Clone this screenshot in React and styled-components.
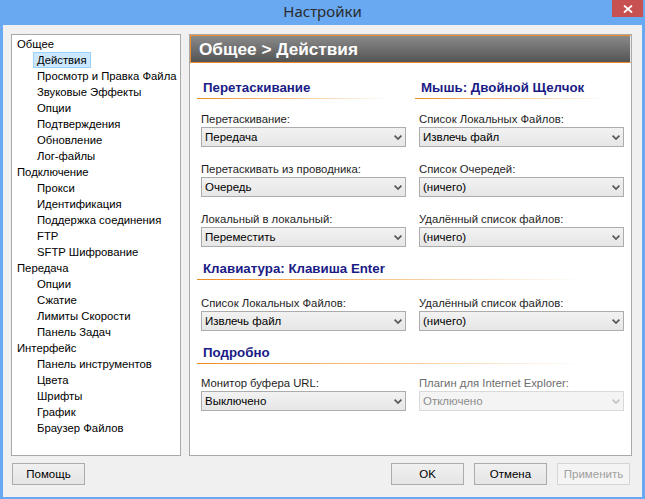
import React from "react";
import styled, { createGlobalStyle } from "styled-components";

const Global = createGlobalStyle`
  html, body { margin: 0; padding: 0; width: 645px; height: 499px; overflow: hidden; }
  body { font-family: "Liberation Sans", Arial, sans-serif; }
  * { box-sizing: border-box; }
`;

const Window = styled.div`
  width: 645px;
  height: 499px;
  background: #69a9f2;
  display: flex;
  flex-direction: column;
`;

const TitleBar = styled.div`
  height: 25px;
  display: grid;
  grid-template-columns: 1fr auto 1fr;
  align-items: center;
`;

const Title = styled.div`
  grid-column: 2;
  font-family: "Noto Sans", "Open Sans", sans-serif;
  font-size: 15px;
  color: #2b2b2b;
  line-height: 25px;
  margin-top: -2px;
`;

const CloseButton = styled.div`
  grid-column: 3;
  justify-self: end;
  align-self: start;
  width: 31px;
  height: 17px;
  margin-right: 2px;
  background: #c75050;
  display: flex;
  align-items: center;
  justify-content: center;
`;

const Body = styled.div`
  flex: 1;
  margin: 0 3px 2px 3px;
  background: #f0f0f0;
  padding: 9px 10px 12px 8px;
  display: flex;
  flex-direction: column;
`;

const Main = styled.div`
  flex: 1;
  display: flex;
  gap: 8px;
  min-height: 0;
`;

const Tree = styled.div`
  width: 170px;
  background: #fff;
  border: 1px solid #a9a9a9;
  padding: 1px 0 0 1px;
  font-size: 11.3px;
  color: #000;
`;

const TreeItem = styled.div`
  height: 16px;
  line-height: 14px;
  padding: 0 3px;
  border: 1px solid ${(p) => (p.$selected ? "#99d1ff" : "transparent")};
  background: ${(p) => (p.$selected ? "#cce8ff" : "transparent")};
  margin-left: ${(p) => (p.$child ? "20px" : "0")};
  width: max-content;
  white-space: nowrap;
`;

const Panel = styled.div`
  flex: 1;
  background: #fff;
  border: 1px solid #a9a9a9;
  display: flex;
  flex-direction: column;
`;

const PanelHeader = styled.div`
  height: 28px;
  border: 1px solid #f08c2c;
  border-right-color: #e8e8e8;
  background: linear-gradient(#8a8a8a, #545454);
  color: #fff;
  font-weight: bold;
  font-size: 17.2px;
  line-height: 26px;
  padding-left: 8px;
`;

const PanelBody = styled.div`
  padding: 17px 7px 0 11px;
  display: flex;
  flex-direction: column;
  gap: 14px;
`;

const Section = styled.div`
  display: flex;
  flex-direction: column;
  gap: ${(p) => p.$gap}px;
`;

const Columns = styled.div`
  display: grid;
  grid-template-columns: 205px 205px;
  column-gap: 13px;
  row-gap: 15px;
`;

const Heading = styled.div`
  grid-column: ${(p) => (p.$wide ? "1 / span 2" : "auto")};
  margin-left: -4px;
  padding: 0 0 2px 6px;
  font-size: 13.3px;
  font-weight: bold;
  line-height: 16px;
  color: #1b1b86;
  &::after {
    content: "";
    display: block;
    height: 1px;
    width: ${(p) => (p.$wide ? "92%" : "95%")};
    margin-left: -6px;
    margin-top: 2px;
    background: linear-gradient(to right, #f08a1e, rgba(246, 180, 110, 0.6) 60%, rgba(255, 255, 255, 0));
  }
`;

const Field = styled.div`
  display: flex;
  flex-direction: column;
  gap: 1px;
`;

const Label = styled.div`
  font-size: 11.3px;
  line-height: 14px;
  color: ${(p) => (p.$disabled ? "#6d6d6d" : "#1e1e1e")};
  white-space: nowrap;
`;

const Combo = styled.div`
  height: 20px;
  border: 1px solid ${(p) => (p.$disabled ? "#d9d9d9" : "#acacac")};
  background: ${(p) => (p.$disabled ? "#f4f4f4" : "linear-gradient(#f2f2f2, #e6e6e6)")};
  color: ${(p) => (p.$disabled ? "#8d8d8d" : "#000")};
  font-size: 11.5px;
  display: flex;
  align-items: center;
  justify-content: space-between;
  padding: 0 3px 0 3px;
`;

const ButtonRow = styled.div`
  display: flex;
  gap: 10px;
  margin-top: 7px;
  padding: 0 2px 0 1px;
`;

const Spacer = styled.div`
  flex: 1;
`;

const Button = styled.div`
  width: 73px;
  height: 22px;
  border: 1px solid ${(p) => (p.$disabled ? "#d5d5d5" : "#acacac")};
  background: ${(p) => (p.$disabled ? "#f4f4f4" : "linear-gradient(#f0f0f0, #e5e5e5)")};
  color: ${(p) => (p.$disabled ? "#a0a0a0" : "#000")};
  font-size: 11.5px;
  display: flex;
  align-items: center;
  justify-content: center;
`;

const Chevron = ({ color }) => (
  <svg width="8" height="5" viewBox="0 0 8 5">
    <path d="M0.6 0.6 L4 4 L7.4 0.6" fill="none" stroke={color} strokeWidth="1.7" />
  </svg>
);

const Select = ({ value, disabled }) => (
  <Combo $disabled={disabled}>
    <span>{value}</span>
    <Chevron color={disabled ? "#c4c4c4" : "#555"} />
  </Combo>
);

const F = ({ label, value, disabled }) => (
  <Field>
    <Label $disabled={disabled}>{label}</Label>
    <Select value={value} disabled={disabled} />
  </Field>
);

const tree = [
  ["Общее", ["Действия", "Просмотр и Правка Файла", "Звуковые Эффекты", "Опции", "Подтверждения", "Обновление", "Лог-файлы"]],
  ["Подключение", ["Прокси", "Идентификация", "Поддержка соединения", "FTP", "SFTP Шифрование"]],
  ["Передача", ["Опции", "Сжатие", "Лимиты Скорости", "Панель Задач"]],
  ["Интерфейс", ["Панель инструментов", "Цвета", "Шрифты", "График", "Браузер Файлов"]],
];

export default function App() {
  return (
    <>
      <Global />
      <Window>
        <TitleBar>
          <Title>Настройки</Title>
          <CloseButton>
            <svg width="10" height="8" viewBox="0 0 10 8">
              <path d="M1 0.5 L9 7.5 M9 0.5 L1 7.5" stroke="#fff" strokeWidth="1.8" />
            </svg>
          </CloseButton>
        </TitleBar>
        <Body>
          <Main>
            <Tree>
              {tree.map(([group, items], gi) => (
                <React.Fragment key={group}>
                  <TreeItem>{group}</TreeItem>
                  {items.map((it, i) => (
                    <TreeItem key={it + i} $child $selected={gi === 0 && i === 0}>
                      {it}
                    </TreeItem>
                  ))}
                </React.Fragment>
              ))}
            </Tree>
            <Panel>
              <PanelHeader>Общее &gt; Действия</PanelHeader>
              <PanelBody>
                <Section $gap={11}>
                  <Columns>
                    <Heading>Перетаскивание</Heading>
                    <Heading>Мышь: Двойной Щелчок</Heading>
                  </Columns>
                  <Columns>
                    <F label="Перетаскивание:" value="Передача" />
                    <F label="Список Локальных Файлов:" value="Извлечь файл" />
                    <F label="Перетаскивать из проводника:" value="Очередь" />
                    <F label="Список Очередей:" value="(ничего)" />
                    <F label="Локальный в локальный:" value="Переместить" />
                    <F label="Удалённый список файлов:" value="(ничего)" />
                  </Columns>
                </Section>
                <Section $gap={14}>
                  <Columns>
                    <Heading $wide>Клавиатура: Клавиша Enter</Heading>
                  </Columns>
                  <Columns>
                    <F label="Список Локальных Файлов:" value="Извлечь файл" />
                    <F label="Удалённый список файлов:" value="(ничего)" />
                  </Columns>
                </Section>
                <Section $gap={10}>
                  <Columns>
                    <Heading $wide>Подробно</Heading>
                  </Columns>
                  <Columns>
                    <F label="Монитор буфера URL:" value="Выключено" />
                    <F label="Плагин для Internet Explorer:" value="Отключено" disabled />
                  </Columns>
                </Section>
              </PanelBody>
            </Panel>
          </Main>
          <ButtonRow>
            <Button>Помощь</Button>
            <Spacer />
            <Button>OK</Button>
            <Button>Отмена</Button>
            <Button $disabled>Применить</Button>
          </ButtonRow>
        </Body>
      </Window>
    </>
  );
}
